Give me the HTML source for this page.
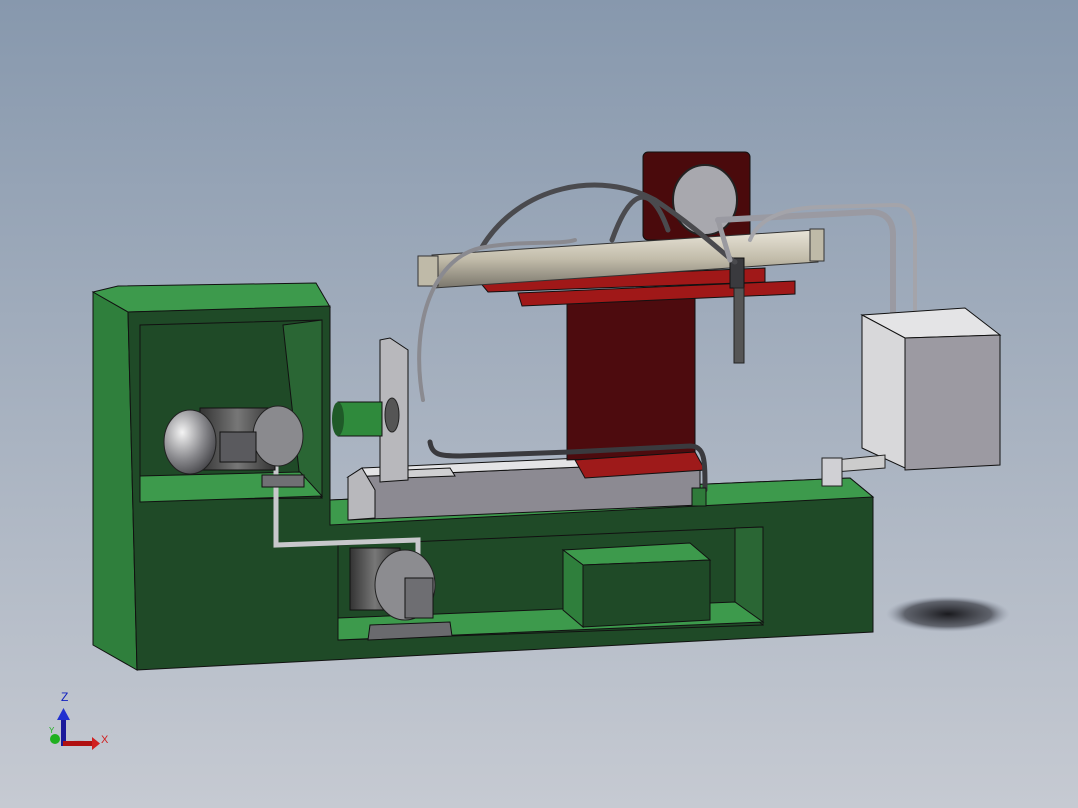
<!DOCTYPE html>
<html><head><meta charset="utf-8"><style>
html,body{margin:0;padding:0;width:1078px;height:808px;overflow:hidden}
svg{display:block}
</style></head><body>
<svg width="1078" height="808" viewBox="0 0 1078 808" xmlns="http://www.w3.org/2000/svg">
<defs>
<linearGradient id="bg" x1="0" y1="0" x2="0" y2="1"><stop offset="0" stop-color="#8798ad"/><stop offset="1" stop-color="#c6cad2"/></linearGradient>
<linearGradient id="tube" x1="0" y1="0" x2="0" y2="1"><stop offset="0" stop-color="#e8e4d8"/><stop offset="0.5" stop-color="#c2bcaa"/><stop offset="1" stop-color="#7a766c"/></linearGradient>
<radialGradient id="sh" cx="0.5" cy="0.5" r="0.5"><stop offset="0" stop-color="#1a1a1e"/><stop offset="0.7" stop-color="#3a3c44" stop-opacity="0.7"/><stop offset="1" stop-color="#8890a0" stop-opacity="0"/></radialGradient>
<radialGradient id="motor" cx="0.35" cy="0.35" r="0.7"><stop offset="0" stop-color="#f4f4f4"/><stop offset="0.6" stop-color="#8a8a8e"/><stop offset="1" stop-color="#4a4a4e"/></radialGradient>
<linearGradient id="fins" x1="0" y1="0" x2="1" y2="0"><stop offset="0" stop-color="#333"/><stop offset="0.5" stop-color="#777"/><stop offset="1" stop-color="#333"/></linearGradient>
</defs>
<rect width="1078" height="808" fill="url(#bg)"/>
<ellipse cx="948" cy="614" rx="62" ry="18" fill="url(#sh)"/>

<polygon points="93,292 128,312 137,670 93,645" fill="#2f7f3c" stroke="#111" stroke-width="1"/>
<polygon points="93,292 118,286 316,283 330,307 128,312" fill="#3d9a4c" stroke="#111" stroke-width="1"/>
<polygon points="128,312 330,306 330,500 850,478 873,497 873,632 137,670" fill="#1f4a27" stroke="#111" stroke-width="1"/>
<polygon points="330,500 850,478 873,497 330,525" fill="#3d9a4c" stroke="#111" stroke-width="1"/>
<polygon points="140,325 322,320 322,498 140,500" fill="#1f4a27" stroke="#111" stroke-width="1"/>
<polygon points="283,325 322,320 322,498 300,480" fill="#2a6634" stroke="#111" stroke-width="1"/>
<polygon points="140,476 300,472 322,496 140,502" fill="#3d9a4c" stroke="#111" stroke-width="1"/>
<polygon points="338,545 763,527 763,625 338,640" fill="#1f4a27" stroke="#111" stroke-width="1"/>
<polygon points="735,528 763,527 763,625 735,602" fill="#2a6634" stroke="#111" stroke-width="1"/>
<polygon points="338,618 735,602 763,622 338,640" fill="#3d9a4c" stroke="#111" stroke-width="1"/>
<polygon points="563,550 690,543 710,560 583,565" fill="#3d9a4c" stroke="#111" stroke-width="1"/>
<polygon points="563,550 583,565 583,627 563,610" fill="#2f7f3c" stroke="#111" stroke-width="1"/>
<polygon points="583,565 710,560 710,620 583,627" fill="#1f4a27" stroke="#111" stroke-width="1"/>

<polygon points="348,477 700,462 700,505 348,520" fill="#8c8a92" stroke="#111" stroke-width="1"/>
<polygon points="348,477 362,468 690,453 700,462" fill="#e4e4e6" stroke="#111" stroke-width="1"/>
<polygon points="348,477 362,468 375,490 375,518 348,520" fill="#b8b8bc" stroke="#111"/>
<polygon points="400,478 455,476 450,468 405,470" fill="#d0d0d2" stroke="#111"/>

<rect x="643" y="152" width="107" height="88" rx="5" fill="#4a0a0c" stroke="#111"/>
<ellipse cx="705" cy="200" rx="32" ry="35" fill="#a8a8ae" stroke="#222" stroke-width="2"/>
<polygon points="567,298 695,292 695,455 567,460" fill="#4d0b0e" stroke="#111"/>
<polygon points="575,460 695,452 705,470 585,478" fill="#9e1a1a" stroke="#111"/>
<polygon points="478,280 765,268 765,282 488,292" fill="#a01818" stroke="#111"/>
<polygon points="518,293 795,281 795,294 522,306" fill="#a01818" stroke="#111"/>

<polygon points="380,340 390,338 408,350 408,480 380,482" fill="#b8b8bc" stroke="#111"/>
<ellipse cx="392" cy="415" rx="7" ry="17" fill="#555" stroke="#222"/>
<rect x="338" y="402" width="44" height="34" fill="#2f8a3c" stroke="#111"/>
<ellipse cx="338" cy="419" rx="6" ry="17" fill="#1f5a28"/>

<polygon points="432,255 815,230 818,262 434,288" fill="url(#tube)" stroke="#333"/>
<rect x="418" y="256" width="20" height="30" fill="#bfbaa8" stroke="#333"/>
<rect x="810" y="229" width="14" height="32" fill="#bfbaa8" stroke="#333"/>
<rect x="730" y="258" width="14" height="30" fill="#3a3a3e" stroke="#111"/>
<rect x="734" y="288" width="10" height="75" fill="#555" stroke="#222"/>
<g fill="none" stroke-linecap="round">
<path d="M482,247 C520,185 600,170 655,200 C700,230 730,260 735,262" stroke="#4a4a4e" stroke-width="5"/>
<path d="M612,240 C630,190 650,180 668,230" stroke="#4a4a4e" stroke-width="5"/>
<path d="M423,400 C410,330 430,260 480,248 C520,240 560,245 575,240" stroke="#8a8a90" stroke-width="4"/>
<path d="M718,220 L730,260" stroke="#9a9aa0" stroke-width="5"/>
<path d="M718,220 L870,212 C885,212 893,220 893,235 L893,318" stroke="#9a9aa2" stroke-width="6"/>
<path d="M750,240 C760,215 790,208 820,207 L895,205 C910,205 915,215 915,235 L915,335" stroke="#a4a4aa" stroke-width="4"/>
<path d="M430,442 C432,455 440,456 460,456 L570,452 L690,446 C705,446 705,460 705,490" stroke="#3a3a3e" stroke-width="5"/>
<path d="M262,458 L276,462 L276,545 L418,540 L418,580" stroke="#c8c8cc" stroke-width="5"/>
</g>
<rect x="692" y="488" width="14" height="18" fill="#2f7a3a" stroke="#111"/>

<polygon points="862,315 965,308 1000,335 905,338" fill="#e4e4e6" stroke="#111"/>
<polygon points="862,315 905,338 905,468 862,448" fill="#d8d8da" stroke="#111"/>
<polygon points="905,338 1000,335 1000,465 905,470" fill="#9c9aa2" stroke="#111"/>
<polygon points="835,460 885,455 885,468 835,472" fill="#ccc" stroke="#222"/>
<rect x="822" y="458" width="20" height="28" fill="#d0d0d4" stroke="#222"/>

<rect x="200" y="408" width="75" height="62" fill="url(#fins)" stroke="#111"/>
<ellipse cx="190" cy="442" rx="26" ry="32" fill="url(#motor)" stroke="#222"/>
<ellipse cx="278" cy="436" rx="25" ry="30" fill="#8a8a8e" stroke="#222"/>
<rect x="220" y="432" width="36" height="30" fill="#5a5a5e" stroke="#111"/>
<rect x="262" y="475" width="42" height="12" fill="#707074" stroke="#111"/>
<rect x="350" y="548" width="50" height="62" fill="url(#fins)" stroke="#111"/>
<ellipse cx="405" cy="585" rx="30" ry="35" fill="#8c8c90" stroke="#222"/>
<rect x="405" y="578" width="28" height="40" fill="#6e6e72" stroke="#111"/>
<polygon points="370,625 450,622 452,636 368,640" fill="#6a6a6e" stroke="#111"/>

<path d="M62,745 A34,34 0 0 1 96,745 Z" fill="#8a8c92" opacity="0.4"/>
<rect x="61" y="718" width="5" height="28" fill="#1a1a9a"/>
<polygon points="57,720 63.5,708 70,720" fill="#2030d0"/>
<rect x="63" y="741" width="30" height="5" fill="#b01010"/>
<polygon points="92,737 100,743.5 92,750" fill="#d02020"/>
<ellipse cx="55" cy="739" rx="5" ry="5" fill="#20b020"/>
<text x="61" y="701" font-family="Liberation Sans, sans-serif" font-size="12" fill="#1020c0">Z</text>
<text x="101" y="743" font-family="Liberation Sans, sans-serif" font-size="11" fill="#d02020">X</text>
<text x="49" y="733" font-family="Liberation Sans, sans-serif" font-size="8" fill="#20b020">Y</text>
</svg>
</body></html>
